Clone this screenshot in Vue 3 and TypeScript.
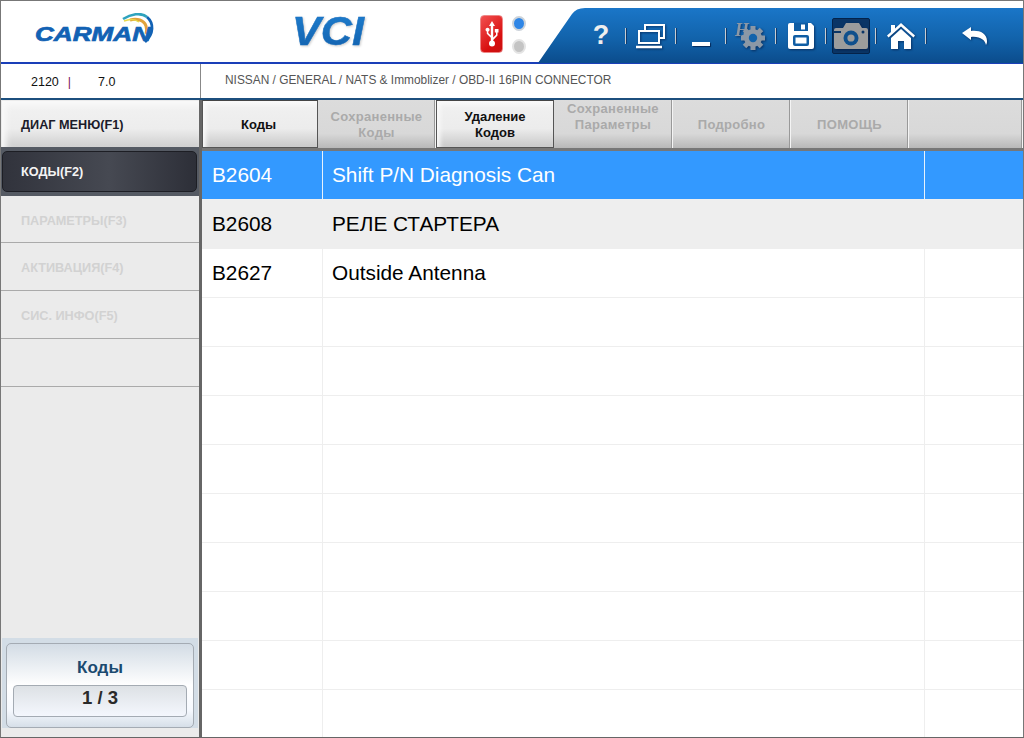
<script setup lang="ts">
interface Tab {
  label: string[]
  active?: boolean
  raised?: boolean
}

interface CodeRow {
  code: string
  text: string
}

const tabs: Tab[] = [
  { label: ['Коды'], active: true },
  { label: ['Сохраненные', 'Коды'] },
  { label: ['Удаление', 'Кодов'], active: true },
  { label: ['Сохраненные', 'Параметры'], raised: true },
  { label: ['Подробно'] },
  { label: ['ПОМОЩЬ'] },
  { label: [] }
]

const disabledMenu = ['ПАРАМЕТРЫ(F3)', 'АКТИВАЦИЯ(F4)', 'СИС. ИНФО(F5)', '']

const codes: CodeRow[] = [
  { code: 'B2604', text: 'Shift P/N Diagnosis Can' },
  { code: 'B2608', text: 'РЕЛЕ СТАРТЕРА' },
  { code: 'B2627', text: 'Outside Antenna' }
]

// таблица всегда показывает 12 строк
const rows: CodeRow[] = Array.from({ length: 12 }, (_, i) => codes[i] ?? { code: '', text: '' })

const gearTeeth = [0, 45, 90, 135, 180, 225, 270, 315]
</script>

<template>
  <div class="app">
    <header class="top">
      <svg class="logo" width="124" height="32" viewBox="0 0 124 32">
        <path d="M90 6 C98 1 108 -1 114 4" fill="none" stroke="#2fa3bd" stroke-width="2.6" />
        <path d="M114 4 C121 10 121 21 112 29" fill="none" stroke="#1262b4" stroke-width="2.8" />
        <path d="M97 7 C104 5 111 7 113 13 C114 16 114 18 113 21" fill="none" stroke="#e0a23c" stroke-width="3" />
        <path d="M91 8 C96 6 102 6 106 9" fill="none" stroke="#e8d84a" stroke-width="1.4" />
        <text x="2" y="28" class="logo-text" textLength="116" lengthAdjust="spacingAndGlyphs">CARMAN</text>
      </svg>
      <svg class="vci" width="80" height="48" viewBox="0 0 80 48">
        <defs>
          <linearGradient id="vciFill" x1="0" y1="0" x2="0" y2="1">
            <stop offset="0" stop-color="#1f7fd0" />
            <stop offset="1" stop-color="#1260ac" />
          </linearGradient>
        </defs>
        <text x="0" y="38" class="vci-text" fill="url(#vciFill)" textLength="72" lengthAdjust="spacingAndGlyphs">VCI</text>
      </svg>
      <div class="usb">
        <svg width="14" height="26" viewBox="0 0 14 26">
          <path d="M7 0 L10 5 H8.200 V16.500 L11 13.800 V11.500 H9.800 V8 H13.500 V11.500 H12.500 V14.600 L8.200 19 V21 H5.800 V16.800 L1.800 12.800 V10.600 A2 2 0 1 1 3.300 10.600 V12 L5.800 14.600 V5 H4 Z" fill="#fff" />
          <circle cx="7" cy="22.500" r="3" fill="#fff" />
        </svg>
      </div>
      <div class="leds">
        <span class="led led-on"></span>
        <span class="led"></span>
      </div>
      <nav class="tools">
        <div class="tool"><span class="question">?</span></div>
        <i class="sep"></i>
        <div class="tool">
          <svg width="30" height="26" viewBox="0 0 30 26" fill="none" stroke="#fff" stroke-width="2">
            <path d="M9 7 V2 H28 V15 H23" />
            <rect x="3" y="8" width="20" height="12" />
            <path d="M0 24 H26" stroke-width="2.500" />
          </svg>
        </div>
        <i class="sep"></i>
        <div class="tool"><span class="minimize"></span></div>
        <i class="sep"></i>
        <div class="tool">
          <svg width="34" height="30" viewBox="0 0 34 30">
            <text x="1" y="15" class="h-mark">H</text>
            <g fill="#8b98a6">
              <rect
                v-for="deg in gearTeeth"
                :key="deg"
                x="16.500"
                y="5"
                width="5"
                height="6"
                :transform="`rotate(${deg} 19 17)`"
              />
              <circle cx="19" cy="17" r="9" />
            </g>
            <circle cx="19" cy="17" r="4.200" fill="#1263ab" />
          </svg>
        </div>
        <i class="sep"></i>
        <div class="tool">
          <svg width="26" height="26" viewBox="0 0 26 26">
            <path d="M2 0 H23 L26 3 V24 A2 2 0 0 1 24 26 H2 A2 2 0 0 1 0 24 V2 A2 2 0 0 1 2 0 Z" fill="#fff" />
            <rect x="6" y="0" width="14" height="8" fill="#0f5da4" />
            <rect x="13" y="1.500" width="4" height="5" fill="#fff" />
            <rect x="5" y="12" width="16" height="11" rx="2" fill="#0f5da4" />
            <rect x="7.500" y="14.500" width="11" height="6" fill="#fff" />
          </svg>
        </div>
        <i class="sep"></i>
        <div class="tool">
          <div class="tool-active">
            <svg width="34" height="26" viewBox="0 0 34 26">
              <path d="M0 7 A2 2 0 0 1 2 5 H9 L12 0 H25 L28 5 H32 A2 2 0 0 1 34 7 V24 A2 2 0 0 1 32 26 H2 A2 2 0 0 1 0 24 Z" fill="#9c9c9c" />
              <rect x="0" y="8" width="7" height="2" fill="#0a3566" />
              <circle cx="17" cy="15" r="7.500" fill="#0f4f8c" />
              <circle cx="17" cy="15" r="3.600" fill="#9c9c9c" />
              <circle cx="29" cy="9" r="1.500" fill="#0a3566" />
            </svg>
          </div>
        </div>
        <i class="sep"></i>
        <div class="tool">
          <svg width="28" height="26" viewBox="0 0 28 26">
            <path d="M14 0 L28 12.500 L26.500 14.500 L14 3.500 L1.500 14.500 L0 12.500 L4 9 V2 H8 V5.500 Z" fill="#fff" />
            <path d="M14 6 L24 15 V26 H17 V18 H11 V26 H4 V15 Z" fill="#fff" />
          </svg>
        </div>
        <i class="sep"></i>
        <div class="tool tool-last">
          <svg width="26" height="18" viewBox="0 0 26 18">
            <path d="M0 6 L9 0 V4 C17 3 25 6 25 14 C25 15 25 16 24 18 C23 13 18 9 9 10 V13 Z" fill="#fff" />
          </svg>
        </div>
      </nav>
    </header>

    <div class="info">
      <div class="version">
        <span>2120</span>
        <span class="pipe">|</span>
        <span class="ver-num">7.0</span>
      </div>
      <div class="path">NISSAN / GENERAL / NATS &amp; Immoblizer / OBD-II 16PIN CONNECTOR</div>
    </div>

    <div class="body">
      <aside class="side">
        <div class="menu-main">ДИАГ МЕНЮ(F1)</div>
        <div class="menu-band">
          <div class="menu-current">КОДЫ(F2)</div>
        </div>
        <div v-for="(item, i) in disabledMenu" :key="i" class="menu-item" :class="{ short: i === 0 }">{{ item }}</div>

        <div class="counter">
          <div class="counter-card">
            <div class="counter-title">Коды</div>
            <div class="counter-value">1 / 3</div>
          </div>
        </div>
      </aside>

      <main class="main">
        <div class="tabs">
          <div
            v-for="(tab, i) in tabs"
            :key="i"
            class="tab"
            :class="{ active: tab.active, raised: tab.raised, first: i === 0 }"
          >
            <span v-for="line in tab.label" :key="line">{{ line }}</span>
          </div>
        </div>
        <div class="table">
          <div v-for="(row, i) in rows" :key="i" class="row" :class="{ selected: i === 0, odd: i === 1 }">
            <div class="cell code">{{ row.code }}</div>
            <div class="cell text">{{ row.text }}</div>
            <div class="cell rest"></div>
          </div>
        </div>
      </main>
    </div>
  </div>
</template>

<style scoped>
.app {
  width: 1024px;
  height: 738px;
  box-sizing: border-box;
  border: 1px solid #777;
  border-bottom-color: #666;
  background: #fff;
  font-family: "Liberation Sans", Arial, sans-serif;
  display: flex;
  flex-direction: column;
  overflow: hidden;
}

/* шапка */
.top {
  height: 63px;
  flex: none;
  box-sizing: border-box;
  border-bottom: 2px solid #1a3fb8;
  display: flex;
  align-items: flex-start;
}

.logo {
  margin: 12px 0 0 32px;
  flex: none;
}

.logo-text {
  font: italic bold 21px "Liberation Sans", sans-serif;
  fill: #1262b4;
  stroke: #1262b4;
  stroke-width: 0.7px;
}

.vci {
  margin: 6px 0 0 135px;
  flex: none;
  filter: drop-shadow(1px 1px 1px #ccc);
}

.vci-text {
  font: italic bold 40px "Liberation Sans", sans-serif;
  stroke: #1a70c0;
  stroke-width: 0.5px;
}

.usb {
  width: 23px;
  height: 38px;
  margin: 14px 0 0 108px;
  flex: none;
  box-sizing: border-box;
  border-radius: 4px;
  background: linear-gradient(135deg, #f25050, #d80f0f 70%, #c81212);
  border: 1px solid #e88;
  display: flex;
  align-items: center;
  justify-content: center;
}

.leds {
  margin: 15px 0 0 9px;
  width: 14px;
  flex: none;
  display: flex;
  flex-direction: column;
  gap: 8px;
}

.led {
  width: 14px;
  height: 15px;
  box-sizing: border-box;
  border-radius: 50%;
  border: 2px solid #e4e4e4;
  background: #c4c4c4;
}

.led-on {
  border-color: #ccd3da;
  background: #2f86e6;
}

.tools {
  width: 485px;
  height: 55px;
  margin: 7px 0 -2px 12px;
  flex: none;
  box-sizing: border-box;
  padding-left: 39px;
  background: linear-gradient(#1a76c8, #1263ab 55%, #0b4c8c);
  clip-path: path("M0 55 L34 6 Q38 0 47 0 L485 0 L485 55 Z");
  display: flex;
  align-items: center;
}

.tool {
  width: 48px;
  height: 55px;
  flex: none;
  display: flex;
  align-items: center;
  justify-content: center;
}

.tool svg {
  filter: drop-shadow(1px 1px 1px rgba(0, 20, 60, 0.6));
}

.tool-last {
  width: 96px;
}

.sep {
  width: 2px;
  height: 16px;
  flex: none;
  background: #c8ccd0;
  border-right: 1px solid #0a3a70;
  box-sizing: border-box;
}

.question {
  color: #eee;
  font-size: 27px;
  font-weight: bold;
}

.minimize {
  width: 18px;
  height: 4px;
  margin-top: 16px;
  background: #fff;
  box-shadow: 1px 1px 1px rgba(0, 20, 60, 0.7);
}

.h-mark {
  font: italic bold 18px "Liberation Serif", serif;
  fill: #8b98a6;
}

.tool-active {
  width: 38px;
  height: 36px;
  box-sizing: border-box;
  border: 1px solid #04234a;
  border-radius: 2px;
  background: #0a3566;
  display: flex;
  align-items: center;
  justify-content: center;
}

/* строка пути */
.info {
  height: 36px;
  flex: none;
  box-sizing: border-box;
  border-bottom: 2px solid #1c4f7e;
  display: flex;
}

.version {
  width: 200px;
  flex: none;
  box-sizing: border-box;
  border-right: 1px solid #888;
  padding: 2px 0 0 30px;
  font-size: 12.500px;
  color: #111;
  display: flex;
  align-items: center;
}

.pipe {
  margin-left: 9px;
  color: #7a1060;
}

.ver-num {
  margin-left: 27px;
}

.path {
  padding-left: 24px;
  font-size: 11.900px;
  color: #555;
  line-height: 33px;
}

.body {
  flex: 1;
  min-height: 0;
  display: flex;
}

/* боковое меню */
.side {
  width: 198px;
  flex: none;
  background: #ebebeb;
  display: flex;
  flex-direction: column;
  font-size: 12.700px;
  font-weight: bold;
}

.menu-main {
  height: 46px;
  margin: 1px 0 0 1px;
  flex: none;
  box-sizing: border-box;
  padding-left: 19px;
  line-height: 48px;
  color: #1c1c2a;
  background: linear-gradient(#f2f2f2, #ededed 60%, #cfcfcf);
  box-shadow: inset 4px 4px 6px #fafafa;
}

.menu-band {
  height: 49px;
  flex: none;
  box-sizing: border-box;
  padding: 4px 3px 4px 1px;
  background: #555a63;
  margin-right: -1px;
}

.menu-current {
  height: 41px;
  box-sizing: border-box;
  padding-left: 18px;
  line-height: 41px;
  color: #f4f4f4;
  border: 1px solid #1d1e24;
  border-radius: 5px;
  background: linear-gradient(90deg, #31333c, #464952 55%, #2d2f38);
}

.menu-item {
  height: 48px;
  flex: none;
  box-sizing: border-box;
  padding-left: 20px;
  line-height: 50px;
  color: #d2d2d2;
  border-bottom: 1px solid #aaa;
}

.menu-item.short {
  height: 47px;
}

.counter {
  height: 90px;
  margin: auto 0 9px 1px;
  width: 196px;
  flex: none;
  box-sizing: border-box;
  padding: 5px 4px 0;
  background: #d3dde6;
}

.counter-card {
  height: 85px;
  box-sizing: border-box;
  padding: 0 6px;
  border: 1px solid #a4abb3;
  border-radius: 5px;
  background: linear-gradient(#d3dce5, #fff 50%, #f6f9fe 80%, #d6dfe8);
  display: flex;
  flex-direction: column;
}

.counter-title {
  height: 41px;
  padding-top: 3px;
  box-sizing: border-box;
  line-height: 42px;
  text-align: center;
  font-size: 17px;
  color: #1b4a70;
}

.counter-value {
  height: 32px;
  box-sizing: border-box;
  border: 1px solid #a4abb3;
  border-radius: 4px;
  line-height: 23px;
  text-align: center;
  font-size: 18.500px;
  color: #2a2a2a;
  background: linear-gradient(#dde1e5, #f4f7fd);
}

/* основная часть */
.main {
  flex: 1;
  min-width: 0;
  border-left: 3px solid #666;
  display: flex;
  flex-direction: column;
  overflow: hidden;
}

.tabs {
  height: 51px;
  flex: none;
  box-sizing: border-box;
  border-bottom: 3px solid #777;
  display: flex;
}

.tab {
  width: 118px;
  flex: none;
  box-sizing: border-box;
  padding-top: 2px;
  border-right: 1px solid #f4f4f4;
  box-shadow: inset -1px 0 0 #999;
  background: linear-gradient(#dcdcdc, #d8d8d8 70%, #b8b8b8);
  color: #aaa;
  font-size: 13px;
  font-weight: bold;
  letter-spacing: 0.3px;
  line-height: 16px;
  text-align: center;
  display: flex;
  flex-direction: column;
  justify-content: center;
}

.tab.first {
  width: 116px;
  padding-right: 3px;
}

.tab:last-child {
  flex: 1;
}

.tab.raised {
  width: 119px;
  padding-bottom: 16px;
}

.tab.active {
  border: 1px solid #555;
  border-top-color: #444;
  box-shadow: inset 3px 3px 4px #fafafa;
  background: linear-gradient(#f1f1f1, #ececec 60%, #c9c9c9);
  color: #111;
  letter-spacing: 0;
}

.table {
  flex: 1;
  min-height: 0;
}

.row {
  height: 49px;
  box-sizing: border-box;
  border-bottom: 1px solid #eee;
  display: flex;
  color: #000;
  font-size: 20.800px;
  line-height: 48px;
}

.row.odd {
  background: #eee;
}

.row.selected {
  background: #3399ff;
  color: #fff;
  border-bottom-color: #f0f0f0;
}

.cell {
  box-sizing: border-box;
  height: 48px;
  border-right: 1px solid #eee;
  white-space: nowrap;
}

.row.selected .cell {
  border-right-color: #e8f2fc;
}

.code {
  width: 121px;
  padding-left: 10px;
}

.text {
  width: 602px;
  padding-left: 9px;
}

.rest {
  flex: 1;
  border-right: 0;
}
</style>

<style>
html,
body {
  margin: 0;
  overflow: hidden;
}
</style>
